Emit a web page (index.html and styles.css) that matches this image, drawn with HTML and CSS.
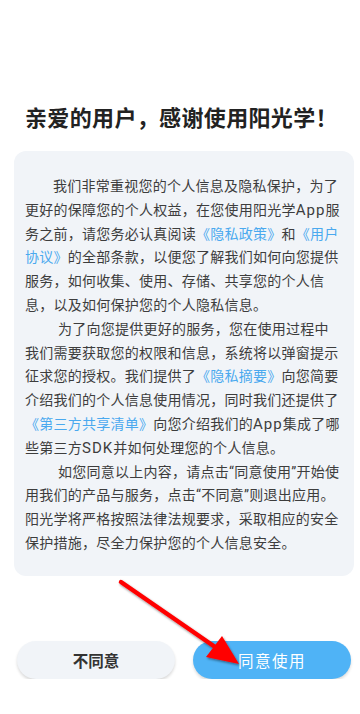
FILE: index.html
```html
<!DOCTYPE html>
<html lang="zh-CN">
<head>
  <meta charset="UTF-8" />
  <meta name="viewport" content="width=device-width, initial-scale=1.0"/>
  <title>隐私政策 - 阳光学</title>
  <link rel="stylesheet" href="styles.css">
</head>
<body>

  <div class="dialog">
    <h1 class="title">亲爱的用户，感谢使用阳光学！</h1>

    <!-- 协议正文 -->
    <div class="terms-card">
      <p class="first">我们非常重视您的个人信息及隐私保护，为了更好的保障您的个人权益，在您使用阳光学<span class="latin">App</span>服务之前，请您务必认真阅读<a href="#">《隐私政策》</a>和<a href="#">《用户协议》</a>的全部条款，以便您了解我们如何向您提供服务，如何收集、使用、存储、共享您的个人信息，以及如何保护您的个人隐私信息。</p>
      <p>为了向您提供更好的服务，您在使用过程中我们需要获取您的权限和信息，系统将以弹窗提示征求您的授权。我们提供了<a href="#">《隐私摘要》</a>向您简要介绍我们的个人信息使用情况，同时我们还提供了<a href="#">《第三方共享清单》</a>向您介绍我们的<span class="latin">App</span>集成了哪些第三方<span class="latin">SDK</span>并如何处理您的个人信息。</p>
      <p>如您同意以上内容，请点击“同意使用”开始使用我们的产品与服务，点击“不同意”则退出应用。阳光学将严格按照法律法规要求，采取相应的安全保护措施，尽全力保护您的个人信息安全。</p>
    </div>

    <div class="button-row">
      <button class="btn-disagree">不同意</button>
      <button class="btn-agree">同意使用</button>
    </div>
  </div>

  <!-- red annotation arrow -->
  <svg class="hint-arrow" width="360" height="714" viewBox="0 0 360 714">
    <defs>
      <filter id="arrowShadow" x="-20%" y="-20%" width="140%" height="140%">
        <feDropShadow dx="1" dy="1.5" stdDeviation="1.2" flood-color="#000" flood-opacity="0.45"/>
      </filter>
    </defs>
    <g filter="url(#arrowShadow)">
      <line x1="121" y1="582" x2="218" y2="649" stroke="#ff0000" stroke-width="4.5" stroke-linecap="round"/>
      <polygon points="239,664 222,636 206,657" fill="#ff0000"/>
    </g>
  </svg>

</body>
</html>
```

FILE: styles.css
```css
body {
  font-family: Roboto, "Noto Sans CJK SC", sans-serif;
  background-color: #ffffff;
  color: #3d3d3d;
  margin: 0;
  padding: 0;
}

.dialog {
  padding: 100px 5px 0 14px;
}

.title {
  font-family: "Noto Sans CJK SC", sans-serif;
  font-size: 22px;
  font-weight: bold;
  letter-spacing: 0.35px;
  color: #222222;
  margin: 0 0 19px 11px;
  line-height: 32px;
}

.terms-card {
  background-color: #f1f4f8;
  border-radius: 12px;
  padding: 24px 11.5px 20px 11px;
  width: 317.5px;
}

.terms-card p {
  margin: 0;
  font-size: 14px;
  letter-spacing: 0.25px;
  line-height: 23.8px;
  text-indent: 33px;
}

.terms-card p.first {
  text-indent: 28px;
}

.terms-card .latin {
  font-size: 15px;
  letter-spacing: 1px;
}

.terms-card a {
  color: #4aa9ef;
  text-decoration: none;
}

.button-row {
  display: flex;
  gap: 18px;
  margin-top: 65px;
  padding-left: 3px;
}

.button-row button {
  width: 158px;
  height: 38px;
  border: none;
  border-radius: 19px;
  font-family: "Noto Sans CJK SC", sans-serif;
  font-size: 15.5px;
  cursor: pointer;
}

.btn-disagree {
  background-color: #f1f4f8;
  color: #333333;
  font-weight: bold;
  box-shadow: 0 2px 3px rgba(0, 0, 0, 0.15);
}

.btn-agree {
  background-color: #4fb3f6;
  color: #ffffff;
  letter-spacing: 1.5px;
  box-shadow: 0 2px 3px rgba(0, 0, 0, 0.15);
}

.hint-arrow {
  position: absolute;
  top: 0;
  left: 0;
  pointer-events: none;
}
```
